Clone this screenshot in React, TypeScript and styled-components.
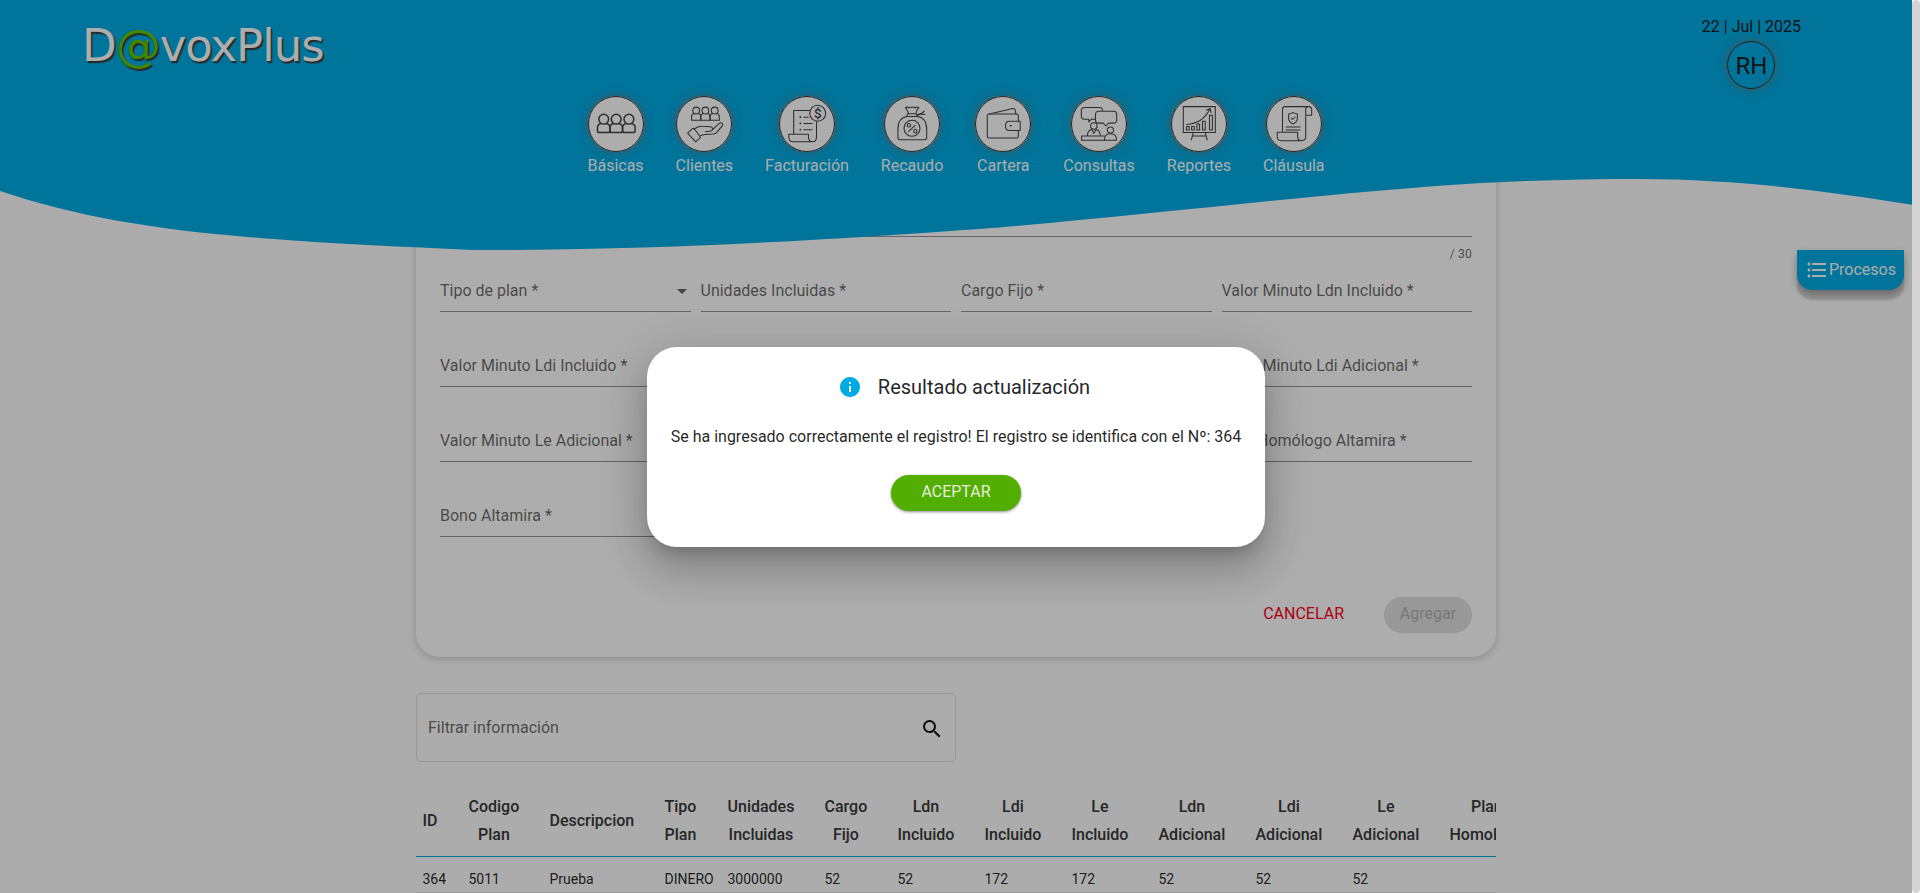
import React from 'react';
import styled, { createGlobalStyle, css } from 'styled-components';
import { MdArrowDropDown, MdFormatListBulleted, MdInfo, MdSearch } from 'react-icons/md';

const colors = {
  brand: '#00abe3',
  green: '#52ae00',
  ink: 'rgba(0, 0, 0, 0.87)',
  label: 'rgba(0, 0, 0, 0.6)',
  line: '#949494',
};

const GlobalStyle = createGlobalStyle`
  * { box-sizing: border-box; }
  body {
    margin: 0;
    overflow: hidden;
    font-family: Roboto, "Liberation Sans", sans-serif;
    font-size: 16px;
    color: ${colors.ink};
  }
`;

const Shell = styled.div`
  display: flex;
  width: 1920px;
  height: 893px;
`;

const Screen = styled.div`
  position: relative;
  flex: 1;
  overflow: hidden;
  background: #fefefe;
`;

const ScrollTrack = styled.div`
  width: 8px;
  background: #fff;
`;

const ScrollThumb = styled.div`
  height: 100%;
  border-radius: 4px;
  background: #d4d4d4;
`;

/* Header */

const Header = styled.header`
  position: absolute;
  top: 0;
  left: 0;
  width: 100%;
  height: 250px;
  z-index: 2;
`;

const Wave = styled.svg`
  position: absolute;
  inset: 0;
  z-index: -1;
`;

const TopBar = styled.div`
  display: flex;
  justify-content: space-between;
  height: 96px;
  padding: 0 111px 0 82px;
`;

const Logo = styled.div`
  padding-top: 18px;
  font-family: "DejaVu Sans", sans-serif;
  font-size: 45px;
  line-height: 56px;
  letter-spacing: -1px;
  color: #fff;
  text-shadow: 1.5px 1.5px 1px #3a3a3a;
`;

const LogoAt = styled.span`
  color: #64c800;
`;

const UserBlock = styled.div`
  display: flex;
  flex-direction: column;
  align-items: center;
  padding-top: 15px;
  line-height: 24px;
  color: #1c1c1c;
`;

const Avatar = styled.div`
  display: flex;
  align-items: center;
  justify-content: center;
  width: 48px;
  height: 48px;
  margin-top: 2px;
  padding-top: 1px;
  border: 1px solid #333;
  border-radius: 50%;
  background: ${colors.brand};
  box-shadow: 0 0 10px rgba(119, 119, 119, 0.8);
  font-size: 24px;
`;

const Nav = styled.nav`
  display: flex;
  justify-content: center;
  gap: 32px;
`;

const NavItem = styled.div`
  display: flex;
  flex-direction: column;
  align-items: center;
  min-width: 56px;
  line-height: 24px;
  color: #fff;
`;

const NavCircle = styled.div`
  width: 56px;
  height: 56px;
  border-radius: 50%;
  background: #fff;
  box-shadow: 0 0 10px rgba(119, 119, 119, 0.8);
  margin-bottom: 2px;
`;

const NavSvg = styled.svg`
  display: block;
  fill: none;
  stroke: #444;
  stroke-width: 1.05;
  stroke-linecap: round;
  stroke-linejoin: round;
`;

const ProcessTab = styled.div`
  position: absolute;
  top: 250px;
  right: 8px;
  z-index: 3;
  display: flex;
  align-items: center;
  width: 107px;
  height: 40px;
  padding-left: 8px;
  border-radius: 0 0 15px 15px;
  background: ${colors.brand};
  box-shadow: 0 10px 2px rgba(0, 0, 0, 0.14), 0 4px 8px rgba(0, 0, 0, 0.3);
  color: #fff;
`;

const ProcessLabel = styled.span`
  padding-bottom: 2px;
`;

/* Form */

const Main = styled.main`
  width: 1080px;
  margin: 0 auto;
  padding-top: 110px;
`;

const FormCard = styled.section`
  height: 547px;
  padding: 71px 24px 24px;
  border-radius: 24px;
  background: #fff;
  box-shadow: 0 2px 10px rgba(0, 0, 0, 0.2);
`;

const FieldGrid = styled.div`
  display: grid;
  grid-template-columns: repeat(4, 1fr);
  column-gap: 10px;
`;

const FieldBox = styled.div<{ $wide?: boolean }>`
  ${(p) => p.$wide && css`grid-column: 1 / -1;`}
`;

const FieldControl = styled.div`
  display: flex;
  align-items: flex-end;
  justify-content: space-between;
  height: 56px;
  padding-bottom: 8px;
  border-bottom: 1px solid ${colors.line};
  line-height: 24px;
  color: ${colors.label};
`;

const FieldHint = styled.div`
  height: 19px;
  padding-top: 9px;
  text-align: right;
  font-size: 12px;
  line-height: 16px;
  letter-spacing: 0.2px;
  color: ${colors.label};
`;

const Arrow = styled(MdArrowDropDown)`
  margin-right: -3px;
`;

const Actions = styled.div`
  display: flex;
  justify-content: flex-end;
  align-items: center;
  gap: 40px;
  margin-top: 41px;
`;

const CancelButton = styled.button`
  height: 36px;
  padding: 0 0 4px;
  border: 0;
  background: none;
  font: inherit;
  color: #ff0018;
`;

const AddButton = styled.button`
  width: 88px;
  height: 36px;
  padding: 0 0 4px;
  border: 0;
  border-radius: 18px;
  background: #e0e0e0;
  font: inherit;
  color: #b0b0b0;
`;

/* Filter and table */

const FilterBox = styled.div`
  display: flex;
  align-items: center;
  justify-content: space-between;
  width: 540px;
  height: 69px;
  margin-top: 36px;
  padding: 0 11px;
  border: 1px solid #e0e0e0;
  border-radius: 5px;
  color: ${colors.label};
`;

const SearchIcon = styled(MdSearch)`
  color: #111;
  margin-top: 2px;
`;

const TableWrap = styled.div`
  margin-top: 30px;
  overflow: hidden;
`;

const Table = styled.table`
  width: 1126px;
  table-layout: fixed;
  border-collapse: separate;
  border-spacing: 0;
`;

const HeadCell = styled.th<{ $w: number }>`
  width: ${(p) => p.$w}px;
  height: 65px;
  padding: 0 0 6px 6.5px;
  border-bottom: 1px solid #00b0e0;
  text-align: left;
  font-weight: 500;
  line-height: 28px;
  color: #383838;
  white-space: nowrap;
`;

const HeadText = styled.span`
  display: inline-block;
  vertical-align: middle;
  text-align: center;
`;

const Cell = styled.td`
  height: 36px;
  padding: 9px 0 0 6.5px;
  border-bottom: 1px solid #e0e0e0;
  font-size: 14px;
  white-space: nowrap;
`;

/* Dialog */

const Backdrop = styled.div`
  position: absolute;
  inset: 0;
  z-index: 5;
  display: flex;
  align-items: center;
  justify-content: center;
  background: rgba(0, 0, 0, 0.32);
`;

const Dialog = styled.div`
  display: flex;
  flex-direction: column;
  align-items: center;
  width: 618px;
  height: 200px;
  margin-top: 1px;
  padding-top: 28px;
  border-radius: 30px;
  background: #fff;
  box-shadow: 0 11px 15px -7px rgba(0, 0, 0, 0.2), 0 24px 38px 3px rgba(0, 0, 0, 0.14),
    0 9px 46px 8px rgba(0, 0, 0, 0.12);
`;

const DialogTitle = styled.h2`
  display: flex;
  align-items: center;
  gap: 16px;
  margin: 0 0 0 16px;
  font-size: 20px;
  font-weight: 400;
  line-height: 24px;
`;

const DialogText = styled.p`
  margin: 26px 0 0;
  line-height: 24px;
`;

const AcceptButton = styled.button`
  width: 130px;
  height: 36px;
  margin-top: 26px;
  padding: 0 0 4px;
  border: 0;
  border-radius: 18px;
  background: ${colors.green};
  box-shadow: 0 1px 3px rgba(0, 0, 0, 0.45);
  font: inherit;
  color: #e6efdf;
`;

const icons: Record<string, React.ReactNode> = {
  people: (
    <g strokeWidth="1.5">
      {[15.7, 28.2, 40.9].map((x) => (
        <React.Fragment key={x}>
          <circle cx={x} cy="23.2" r="4.9" />
          <path d={`M${x - 2.8} 27.6c-2.4.6-3.4 2-3.4 4v3.2c0 1.2.6 1.8 1.7 1.8h9c1.1 0 1.7-.6 1.7-1.8v-3.2c0-2-1-3.4-3.4-4`} />
        </React.Fragment>
      ))}
    </g>
  ),
  clients: (
    <>
      {[20.2, 29.4, 38.7].map((x) => (
        <React.Fragment key={x}>
          <circle cx={x} cy="14.5" r="3.4" />
          <path d={`M${x - 2.2} 17.4c-1.7.4-2.4 1.5-2.4 3v3.9h9.2v-3.9c0-1.5-.7-2.6-2.4-3`} />
        </React.Fragment>
      ))}
      <path d="M11.6 37.2l4.8-4.5c.8-.6 1.4-.4 2 .3l5.5 7.3c.5.7.4 1.2-.2 1.8l-4 3.7z" />
      <path d="M18.2 33c3-2.4 5-2.9 7.8-2.7l8.3.4c2.8.2 3.4 3.5.4 4.2l-5.2.8" />
      <path d="M36.8 33.3l6.200-5.700c2-1.700 4.800-.2 3.200 2.200l-5.300 6.500c-1 1.100-2 1.600-3.500 1.800l-8.800.5c-2 .1-3 .6-4.800 1.500" />
    </>
  ),
  invoice: (
    <>
      <path d="M14.7 38V14.5H30.5M37.5 25.8V41c0 3-1.500 4.800-4 4.800s-4-1.800-4-4.800v-2.800H9.800V41c0 3 1.700 4.800 4.300 4.800h19.400" />
      <circle cx="38.7" cy="17.2" r="8" />
      <text x="38.7" y="22" textAnchor="middle" fontSize="13.5" fontFamily="Roboto" strokeWidth="0.2" fill="#383838">$</text>
      <path strokeWidth="1.8" d="M21.3 21h.1M21.3 27.3h.1M21.3 33.7h.1" />
      <path d="M25 21.3h4.3M25 27.5h8.2M25 33.7h8.2" />
    </>
  ),
  bag: (
    <>
      <path d="M13.9 41.5V33.500c0-7.500 3.600-12.300 9.300-13h10.200c5.700.7 9.300 5.500 9.300 13v8c0 1.500-.7 2.200-2 2.200H15.900c-1.300 0-2-.7-2-2.200z" />
      <rect x="23" y="17.8" width="10" height="2.6" rx="1.2" />
      <path d="M24.5 17.6c-.6-2.600-1.700-4.400-3-6 1.800-.8 3.200-.6 4.400.3 1.500-1 3.300-1 4.600 0 1.200-.9 2.600-1.100 4.300-.3-1.600 1.700-2.600 3.500-3 6M33 18.700c3.200-.2 5.500-1.500 7.300-3.600M33.200 19.200c3.200-1.400 5.500-1.300 7.600-.6" />
      <circle cx="28" cy="32.3" r="8" />
      <circle cx="24.9" cy="29.2" r="1.7" />
      <circle cx="31.3" cy="35.2" r="1.7" />
      <path d="M31.3 29.3l-6.8 6" />
    </>
  ),
  wallet: (
    <>
      <rect x="12.3" y="18" width="31" height="24" rx="1.5" />
      <path d="M14.5 18l23.200-5.400c1.400-.3 2.200.2 2.500 1.600l.7 3.800" />
      <path fill="#fff" d="M45.2 25.3H34.500c-5.400 0-5.400 9.200 0 9.200h10.700z" />
      <path strokeWidth="1.5" d="M35.3 29.8h.8" />
    </>
  ),
  consult: (
    <>
      <path d="M24 23.2h-3.600l-2.600 2.800v-2.800h-4.300c-2 0-3.200-1.200-3.200-3.200v-5.300c0-2 1.200-3.200 3.200-3.200h15c1.800 0 2.900.9 3.100 2.800" />
      <path d="M27.7 15.2h14.800c2 0 3.200 1.200 3.200 3.200v5.500c0 2-1.200 3.200-3.200 3.200h-4.800L34.800 30l-2.600-2.900h-4.500c-2 0-3.200-1.200-3.200-3.200v-5.500c0-2 1.200-3.200 3.200-3.200z" />
      <circle cx="22.8" cy="30" r="3.3" />
      <path d="M16.5 39.3c0-3.200 1.300-5 4.200-5.700l2.100 3.700 2.200-3.700c2.900.7 4.200 2.500 4.200 5.700M10.600 40h22.800M33.400 44.200H10.600V40" />
      <circle cx="39.4" cy="34" r="3.1" />
      <path d="M33.4 44.2c0-4.200 1.800-6.400 6-6.400s6.200 2.200 6.200 6.400z" />
    </>
  ),
  report: (
    <>
      <rect x="12.3" y="10.6" width="32" height="25.8" />
      <path d="M22.3 36.6l-2 7.2M34.200 36.600l2 7.200M21.300 40h14" />
      <path d="M15.7 28.4C26 28 34 23 39 12.800M35.500 14.200l3.600-1.700 1 4" />
      <path d="M15.5 30.5h2.700v3.500h-2.700zM20.600 30.500h2.700v3.500h-2.700zM25.900 28h2.700v6h-2.700zM31.500 25.300h2.700V34h-2.700zM38.500 19.300h2.900V34h-2.900z" />
    </>
  ),
  clause: (
    <>
      <path d="M16.5 36V13.5c0-1.900.9-2.900 2.800-2.900h23.500c1.900 0 2.900 1 2.900 3v5.700h-6M42.600 10.600c-1.900 0-2.900 1-2.900 3v27c0 2.600-1.400 4.100-3.800 4.100s-4.300-1.500-4.300-4.300v-4.100H11.200v4c0 2.900 1.400 4.400 4 4.400h20.700" />
      <path d="M27 16.3c1.500 1.200 2.900 1.700 4.400 1.800v3.900c0 2.900-1.700 4.700-4.400 5.900-2.700-1.200-4.400-3-4.400-5.900v-3.900c1.500-.1 2.900-.6 4.400-1.800zM25.200 22.200l1.300 1.300 2.500-2.500M20 31h14M20 34h14" />
    </>
  ),
};

const navItems = [
  ['Básicas', 'people'],
  ['Clientes', 'clients'],
  ['Facturación', 'invoice'],
  ['Recaudo', 'bag'],
  ['Cartera', 'wallet'],
  ['Consultas', 'consult'],
  ['Reportes', 'report'],
  ['Cláusula', 'clause'],
];

const fields = [
  'Tipo de plan *',
  'Unidades Incluidas *',
  'Cargo Fijo *',
  'Valor Minuto Ldn Incluido *',
  'Valor Minuto Ldi Incluido *',
  'Valor Minuto Le Incluido *',
  'Valor Minuto Ldn Adicional *',
  'Valor Minuto Ldi Adicional *',
  'Valor Minuto Le Adicional *',
  'Plan Altamira *',
  'Cargo Altamira *',
  'Plan Homólogo Altamira *',
  'Bono Altamira *',
];

const columns: { head: string[]; value: string; width: number }[] = [
  { head: ['ID'], value: '364', width: 46 },
  { head: ['Codigo', 'Plan'], value: '5011', width: 81 },
  { head: ['Descripcion'], value: 'Prueba', width: 115 },
  { head: ['Tipo', 'Plan'], value: 'DINERO', width: 63 },
  { head: ['Unidades', 'Incluidas'], value: '3000000', width: 97 },
  { head: ['Cargo', 'Fijo'], value: '52', width: 73 },
  { head: ['Ldn', 'Incluido'], value: '52', width: 87 },
  { head: ['Ldi', 'Incluido'], value: '172', width: 87 },
  { head: ['Le', 'Incluido'], value: '172', width: 87 },
  { head: ['Ldn', 'Adicional'], value: '52', width: 97 },
  { head: ['Ldi', 'Adicional'], value: '52', width: 97 },
  { head: ['Le', 'Adicional'], value: '52', width: 97 },
  { head: ['Plan', 'Homologo'], value: '', width: 99 },
];

export default function App() {
  return (
    <Shell>
      <GlobalStyle />
      <Screen>
        <Header>
          <Wave width="1912" height="250" viewBox="0 0 1912 250">
            <path
              fill={colors.brand}
              d="M0 0H1912V204.700C1830 192 1740 179 1640 179C1572 179 1504 181 1436 186C1280 198 1140 216 979 229C840 239 690 248.500 515 250H473C240 240 120 231 0 191Z"
            />
          </Wave>
          <TopBar>
            <Logo>
              D<LogoAt>@</LogoAt>voxPlus
            </Logo>
            <UserBlock>
              22 | Jul | 2025
              <Avatar>RH</Avatar>
            </UserBlock>
          </TopBar>
          <Nav>
            {navItems.map(([label, icon]) => (
              <NavItem key={label}>
                <NavCircle>
                  <NavSvg width="56" height="56" viewBox="0 0 56 56">
                    <circle cx="28" cy="28" r="27.5" strokeWidth="1" stroke="#333" />
                    {icons[icon]}
                  </NavSvg>
                </NavCircle>
                {label}
              </NavItem>
            ))}
          </Nav>
        </Header>

        <ProcessTab>
          <MdFormatListBulleted size={24} />
          <ProcessLabel>Procesos</ProcessLabel>
        </ProcessTab>

        <Main>
          <FormCard>
            <FieldGrid>
              <FieldBox $wide>
                <FieldControl>Descripción *</FieldControl>
                <FieldHint>/ 30</FieldHint>
              </FieldBox>
              {fields.map((label, i) => (
                <FieldBox key={label}>
                  <FieldControl>
                    {label}
                    {i === 0 && <Arrow size={24} />}
                  </FieldControl>
                  <FieldHint />
                </FieldBox>
              ))}
            </FieldGrid>
            <Actions>
              <CancelButton>CANCELAR</CancelButton>
              <AddButton>Agregar</AddButton>
            </Actions>
          </FormCard>

          <FilterBox>
            Filtrar información
            <SearchIcon size={24} />
          </FilterBox>

          <TableWrap>
            <Table>
              <thead>
                <tr>
                  {columns.map((c, i) => (
                    <HeadCell key={i} $w={c.width}>
                      <HeadText>
                        {c.head[0]}
                        {c.head[1] && <br />}
                        {c.head[1]}
                      </HeadText>
                    </HeadCell>
                  ))}
                </tr>
              </thead>
              <tbody>
                <tr>
                  {columns.map((c, i) => (
                    <Cell key={i}>{c.value}</Cell>
                  ))}
                </tr>
              </tbody>
            </Table>
          </TableWrap>
        </Main>

        <Backdrop>
          <Dialog role="dialog">
            <DialogTitle>
              <MdInfo size={24} color={colors.brand} />
              Resultado actualización
            </DialogTitle>
            <DialogText>
              Se ha ingresado correctamente el registro! El registro se identifica con el Nº: 364
            </DialogText>
            <AcceptButton>ACEPTAR</AcceptButton>
          </Dialog>
        </Backdrop>
      </Screen>
      <ScrollTrack>
        <ScrollThumb />
      </ScrollTrack>
    </Shell>
  );
}
